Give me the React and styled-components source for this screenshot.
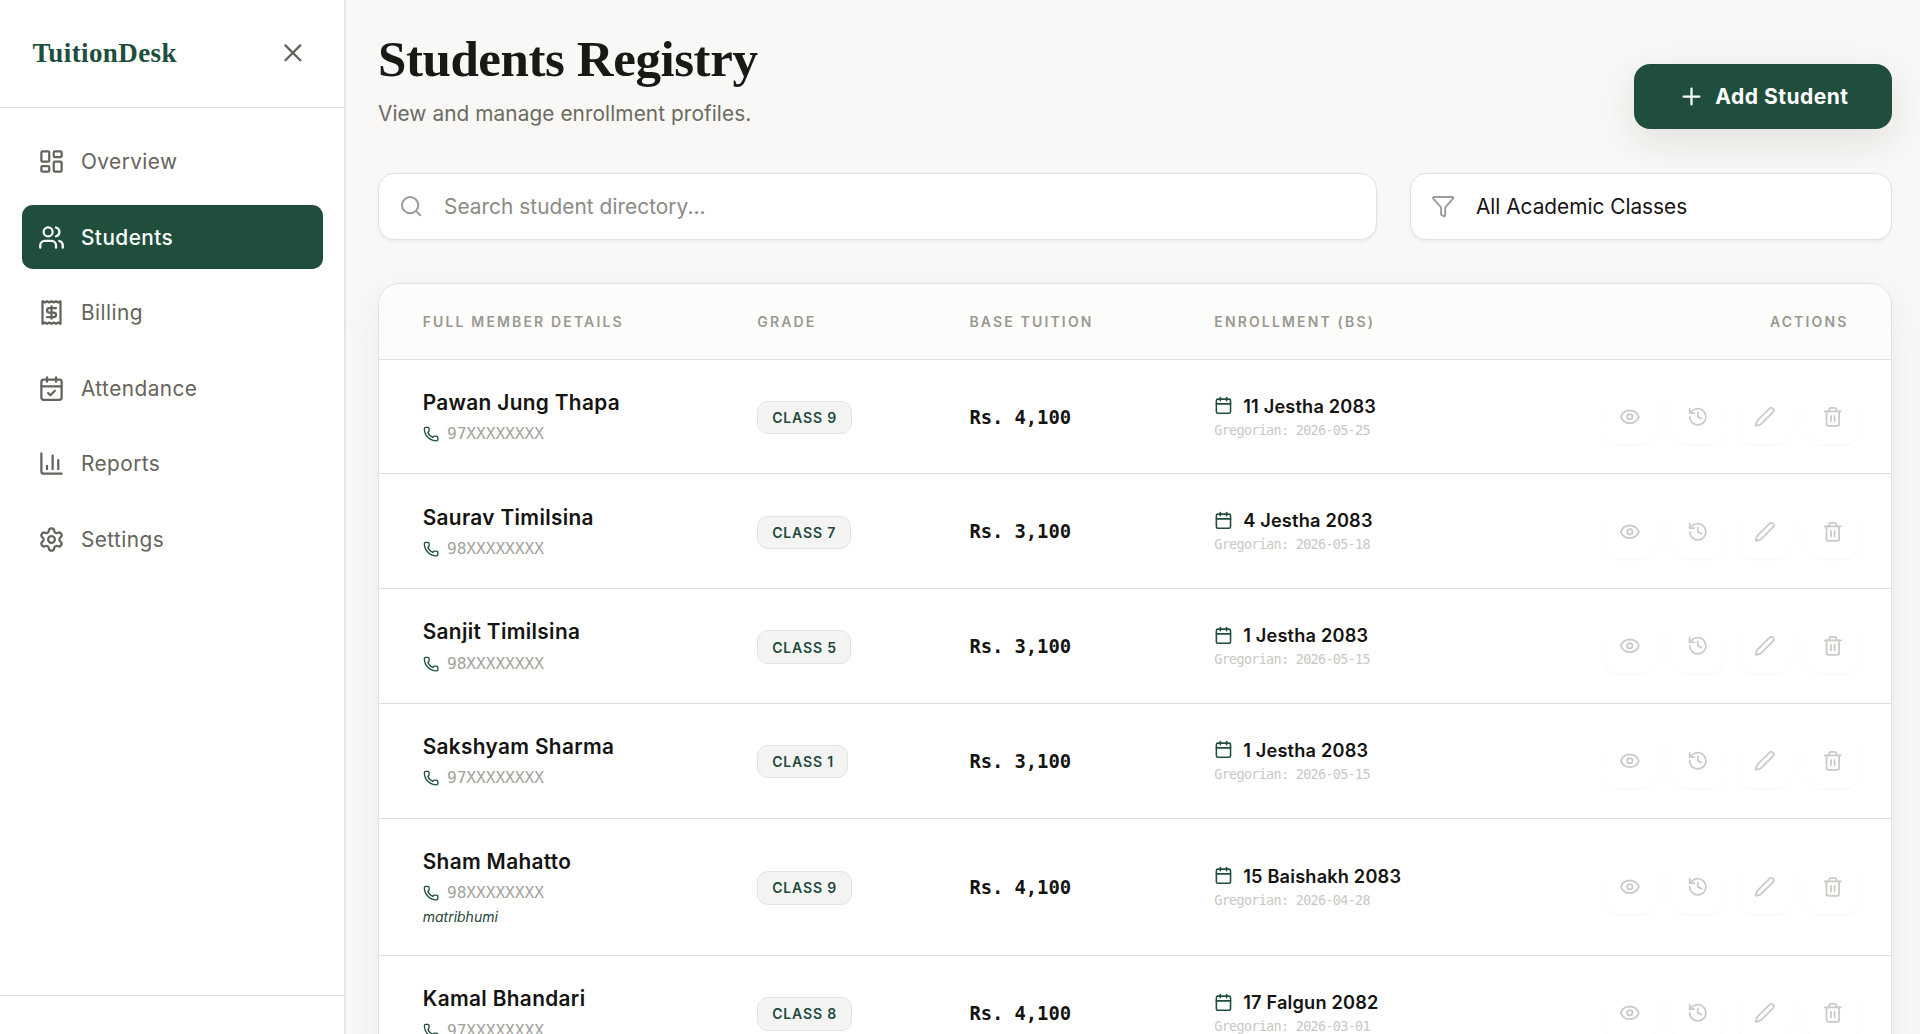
import { useState } from "react";
import styled, { createGlobalStyle } from "styled-components";
import {
    Calendar,
    CalendarCheck,
    ChartColumn,
    Eye,
    Funnel,
    History,
    LayoutDashboard,
    Pen,
    Phone,
    Plus,
    Search,
    Settings,
    Trash2,
    Users,
    X,
} from "lucide-react";

const GlobalStyle = createGlobalStyle`
    *, *::before, *::after {
        box-sizing: border-box;
    }

    body {
        margin: 0;
        background-color: #F9F8F6;
        color: #151412;
        font-family: "Inter", "Liberation Sans", sans-serif;
        overflow: hidden;
    }

    h1, p {
        margin: 0;
    }

    button, input {
        font-family: inherit;
    }
`;

const Layout = styled.div`
    display: flex;
    height: 100vh;
    overflow: hidden;
`;

const Sidebar = styled.aside`
    display: flex;
    flex-direction: column;
    flex: none;
    width: 346px;
    background-color: #FFFFFF;
    border-right: 2px solid #E6E6E4;
`;

const SidebarHeader = styled.div`
    display: flex;
    align-items: center;
    justify-content: space-between;
    height: 107.5px;
    padding: 0 36px 1px 32.4px;
    border-bottom: 1.35px solid #E0E0DE;
`;

const Brand = styled.div`
    font-family: "Liberation Serif", serif;
    font-size: 27px;
    line-height: 32px;
    font-weight: 700;
    letter-spacing: 0.4px;
    color: #204E3D;
`;

const CloseButton = styled.button`
    display: flex;
    padding: 0;
    border: none;
    background: none;
    color: #65635C;
    cursor: pointer;
`;

const Nav = styled.nav`
    display: flex;
    flex-direction: column;
    flex: 1;
    row-gap: 10.8px;
    padding: 21.6px 21px 21.6px 21.6px;
`;

const NavItem = styled.a`
    display: flex;
    align-items: center;
    column-gap: 16.2px;
    height: 64.8px;
    padding: 0 16.2px;
    border-radius: 10.8px;
    font-size: 20.8px;
    font-weight: ${({ $active }) => ($active ? 500 : 400)};
    letter-spacing: 0.45px;
    color: ${({ $active }) => ($active ? "#FFFFFF" : "#65635C")};
    background-color: ${({ $active }) => ($active ? "#204E3D" : "transparent")};
    cursor: pointer;
`;

const SidebarFooter = styled.div`
    height: 39px;
    border-top: 1px solid #E0E0DE;
`;

const Main = styled.main`
    flex: 1;
    min-width: 0;
    padding: 34px 28px 0 32px;
    overflow: hidden;
`;

const PageHeader = styled.header`
    display: flex;
    justify-content: space-between;
    height: 138.7px;
`;

const Title = styled.h1`
    font-family: "Liberation Serif", serif;
    font-size: 51px;
    line-height: 50px;
    font-weight: 700;
    letter-spacing: -0.43px;
    color: #1A1815;
`;

const Subtitle = styled.p`
    margin-top: 14px;
    font-size: 20.8px;
    line-height: 32px;
    letter-spacing: 0.08px;
    color: #6B6A60;
`;

const AddButton = styled.button`
    display: flex;
    align-items: center;
    justify-content: center;
    column-gap: 10.8px;
    width: 258px;
    height: 65px;
    margin-top: 30.2px;
    padding: 0;
    border: none;
    border-radius: 16.2px;
    background-color: #204E3D;
    box-shadow: 0 12px 40px rgba(26, 24, 21, 0.11);
    color: #FFFFFF;
    font-size: 21px;
    font-weight: 700;
    letter-spacing: 0.5px;
    cursor: pointer;
`;

const Filters = styled.div`
    display: flex;
    column-gap: 33px;
`;

const Field = styled.label`
    display: flex;
    align-items: center;
    column-gap: 20.5px;
    width: ${({ $width }) => ($width ? `${$width}px` : "auto")};
    flex: ${({ $width }) => ($width ? "none" : 1)};
    height: 67px;
    padding: 0 20.2px;
    border: 1px solid #E1E1DE;
    border-radius: 16.2px;
    background-color: #FFFFFF;
    box-shadow: 0 1.5px 3px rgba(0, 0, 0, 0.05);
    font-size: 20.8px;
    color: #151412;

    svg {
        flex: none;
        color: #9C9C97;
    }
`;

const SearchInput = styled.input`
    flex: 1;
    min-width: 0;
    padding: 0;
    border: none;
    outline: none;
    background: none;
    font-size: 20.8px;
    letter-spacing: 0.06px;
    color: #151412;

    &::placeholder {
        color: #8A8A85;
        opacity: 1;
    }
`;

const Table = styled.section`
    margin-top: 43.5px;
    border: 1px solid #E1E1DE;
    border-radius: 21.6px;
    background-color: #FFFFFF;
    box-shadow: 0 12px 40px rgba(26, 24, 21, 0.06);
    overflow: hidden;
`;

const Row = styled.div`
    display: grid;
    grid-template-columns: 334.6px 212.2px 244.8px 1fr auto;
    align-items: center;
    min-height: 114.7px;
    padding: 27px 31.5px 27px 43.7px;
    border-bottom: 1px solid #E1E0DD;
`;

const HeadRow = styled(Row)`
    min-height: 75.6px;
    padding-top: 0;
    padding-bottom: 0;
    padding-right: 42.5px;
    background-color: #FCFCFA;
    font-size: 14px;
    font-weight: 600;
    letter-spacing: 2.15px;
    text-transform: uppercase;
    color: #9A9991;
`;

const Name = styled.div`
    font-size: 20.8px;
    line-height: 32px;
    font-weight: 600;
    letter-spacing: 0.35px;
`;

const PhoneLine = styled.div`
    display: flex;
    align-items: center;
    column-gap: 8.1px;
    margin-top: 3.6px;
    line-height: 24px;
    font-family: "DejaVu Sans Mono", monospace;
    font-size: 16.2px;
    letter-spacing: -0.06px;
    color: #A3A29B;

    svg {
        color: #204E3D;
    }
`;

const Note = styled.div`
    font-size: 14px;
    line-height: 23px;
    font-style: italic;
    color: #1F463B;
`;

const Badge = styled.span`
    display: inline-flex;
    align-items: center;
    height: 33.5px;
    margin-top: 2px;
    padding: 0 13.4px 0 13.9px;
    border: 1.35px solid #E2E3E0;
    border-radius: 10.8px;
    background-color: #F4F5F3;
    font-size: 14px;
    font-weight: 600;
    letter-spacing: 0.85px;
    color: #204840;
`;

const Tuition = styled.div`
    font-family: "DejaVu Sans Mono", monospace;
    font-size: 18.9px;
    font-weight: 700;
    letter-spacing: -0.1px;
`;

const Enrollment = styled.div`
    padding-bottom: 2px;
`;

const DateLine = styled.div`
    display: flex;
    align-items: center;
    column-gap: 10px;
    line-height: 28px;
    font-size: 18.2px;
    font-weight: 600;
    letter-spacing: 0.18px;

    svg {
        color: #204E3D;
    }
`;

const Gregorian = styled.div`
    font-family: "DejaVu Sans Mono", monospace;
    font-size: 13.5px;
    line-height: 20px;
    letter-spacing: -0.72px;
    color: #C8C8C4;
`;

const Actions = styled.div`
    display: flex;
    column-gap: 13.5px;
    margin: -4px 0;
`;

const ActionButton = styled.button`
    display: flex;
    align-items: center;
    justify-content: center;
    width: 54px;
    height: 54px;
    padding: 0;
    border: none;
    border-radius: 16.2px;
    background-color: #FFFFFF;
    box-shadow: 0 1.35px 2.7px rgba(0, 0, 0, 0.025);
    color: #CACAC6;
    cursor: pointer;
`;

const navigation = [
    { label: "Overview", icon: LayoutDashboard },
    { label: "Students", icon: Users },
    { label: "Billing", icon: BillingIcon },
    { label: "Attendance", icon: CalendarCheck },
    { label: "Reports", icon: ChartColumn },
    { label: "Settings", icon: Settings },
];

const actions = [
    { label: "View", icon: Eye },
    { label: "History", icon: History },
    { label: "Edit", icon: Pen },
    { label: "Delete", icon: Trash2 },
];

const students = [
    { name: "Pawan Jung Thapa", phone: "97XXXXXXXX", grade: "9", fee: "4,100", date: "11 Jestha 2083", gregorian: "2026-05-25" },
    { name: "Saurav Timilsina", phone: "98XXXXXXXX", grade: "7", fee: "3,100", date: "4 Jestha 2083", gregorian: "2026-05-18" },
    { name: "Sanjit Timilsina", phone: "98XXXXXXXX", grade: "5", fee: "3,100", date: "1 Jestha 2083", gregorian: "2026-05-15" },
    { name: "Sakshyam Sharma", phone: "97XXXXXXXX", grade: "1", fee: "3,100", date: "1 Jestha 2083", gregorian: "2026-05-15" },
    { name: "Sham Mahatto", phone: "98XXXXXXXX", note: "matribhumi", grade: "9", fee: "4,100", date: "15 Baishakh 2083", gregorian: "2026-04-28" },
    { name: "Kamal Bhandari", phone: "97XXXXXXXX", grade: "8", fee: "4,100", date: "17 Falgun 2082", gregorian: "2026-03-01" },
];

// receipt with a dollar sign, zigzag on both edges
function BillingIcon({ size = 24, strokeWidth = 2 }){
    return <svg width={size} height={size} viewBox="0 0 24 24" fill="none" stroke="currentColor"
                strokeWidth={strokeWidth} strokeLinecap="round" strokeLinejoin="round">
        <path d="M4 2v20l2-1 2 1 2-1 2 1 2-1 2 1 2-1 2 1V2l-2 1-2-1-2 1-2-1-2 1-2-1-2 1Z"/>
        <path d="M16 8h-6a2 2 0 1 0 0 4h4a2 2 0 1 1 0 4H8"/>
        <path d="M12 17.5v-11"/>
    </svg>;
}

export default function App(){

    const [query, setQuery] = useState("");
    const [active, setActive] = useState("Students");

    const visible = students.filter((student) => student.name.toLowerCase().includes(query.toLowerCase()));

    return <>
        <GlobalStyle/>
        <Layout>
            <Sidebar>
                <SidebarHeader>
                    <Brand>TuitionDesk</Brand>
                    <CloseButton aria-label="Close menu">
                        <X size={29.7} strokeWidth={1.9}/>
                    </CloseButton>
                </SidebarHeader>
                <Nav>
                    {navigation.map(({ label, icon: Icon }) => (
                        <NavItem key={label} $active={label === active} onClick={() => setActive(label)}>
                            <Icon size={27} strokeWidth={2}/>
                            {label}
                        </NavItem>
                    ))}
                </Nav>
                <SidebarFooter/>
            </Sidebar>
            <Main>
                <PageHeader>
                    <div>
                        <Title>Students Registry</Title>
                        <Subtitle>View and manage enrollment profiles.</Subtitle>
                    </div>
                    <AddButton>
                        <Plus size={27} strokeWidth={2}/>
                        Add Student
                    </AddButton>
                </PageHeader>
                <Filters>
                    <Field>
                        <Search size={24.3} strokeWidth={2}/>
                        <SearchInput value={query} placeholder="Search student directory..."
                                     onChange={(e) => setQuery(e.target.value)}/>
                    </Field>
                    <Field $width={482}>
                        <Funnel size={24.3} strokeWidth={1.9}/>
                        All Academic Classes
                    </Field>
                </Filters>
                <Table>
                    <HeadRow>
                        <div>Full Member Details</div>
                        <div>Grade</div>
                        <div>Base Tuition</div>
                        <div>Enrollment (BS)</div>
                        <div>Actions</div>
                    </HeadRow>
                    {visible.map((student) => (
                        <Row key={student.name}>
                            <div>
                                <Name>{student.name}</Name>
                                <PhoneLine>
                                    <Phone size={16.2} strokeWidth={2}/>
                                    {student.phone}
                                </PhoneLine>
                                {student.note && <Note>{student.note}</Note>}
                            </div>
                            <div>
                                <Badge>CLASS {student.grade}</Badge>
                            </div>
                            <Tuition>Rs. {student.fee}</Tuition>
                            <Enrollment>
                                <DateLine>
                                    <Calendar size={18.9} strokeWidth={2}/>
                                    {student.date}
                                </DateLine>
                                <Gregorian>Gregorian: {student.gregorian}</Gregorian>
                            </Enrollment>
                            <Actions>
                                {actions.map(({ label, icon: Icon }) => (
                                    <ActionButton key={label} aria-label={label}>
                                        <Icon size={21.6} strokeWidth={2}/>
                                    </ActionButton>
                                ))}
                            </Actions>
                        </Row>
                    ))}
                </Table>
            </Main>
        </Layout>
    </>;
}
